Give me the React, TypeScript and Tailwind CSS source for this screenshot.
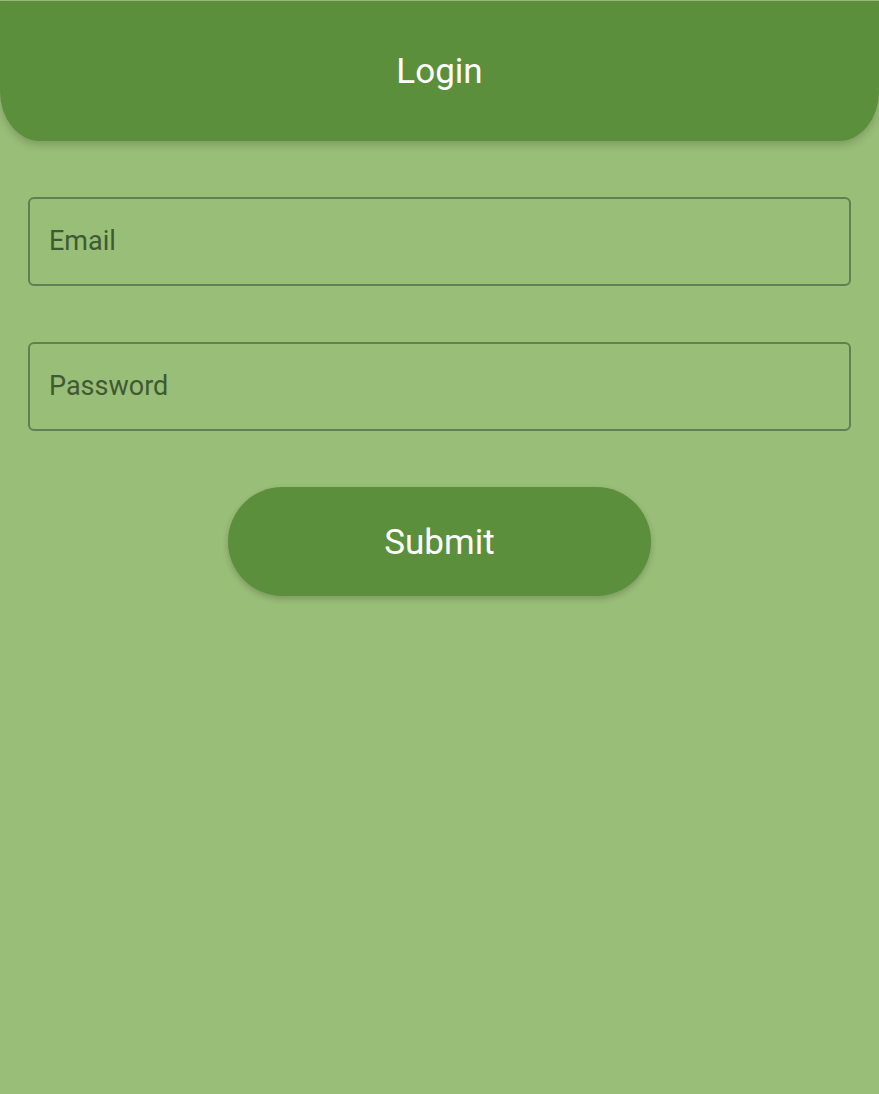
export default function App() {
  return (
    <div className="min-h-[1094px] bg-[#99be78] pt-px font-['Roboto',sans-serif]">
      <header className="flex h-[140px] items-center justify-center rounded-b-[40px_50px] bg-[#5b8f3c] shadow-[0_4px_8px_rgba(0,0,0,0.18)]">
        <h1 className="pt-[2px] text-[35px] font-normal text-white">Login</h1>
      </header>

      <form className="flex flex-col px-[28px] pt-[56px]" onSubmit={(e) => e.preventDefault()}>
        <label className="flex h-[89px] items-center rounded-[6px] border-2 border-[#617f52] px-[19px]">
          <input
            type="email"
            placeholder="Email"
            className="w-full bg-transparent text-[27px] text-[#3e5a31] outline-none placeholder:text-[#3e5a31]"
          />
        </label>
        <label className="mt-[56px] flex h-[89px] items-center rounded-[6px] border-2 border-[#617f52] px-[19px]">
          <input
            type="password"
            placeholder="Password"
            className="w-full bg-transparent text-[27px] text-[#3e5a31] outline-none placeholder:text-[#3e5a31]"
          />
        </label>
        <div className="mt-[56px] flex justify-center">
          <button
            type="submit"
            className="h-[109px] w-[423px] rounded-full bg-[#5b8f3c] pt-[3px] text-[35px] text-white shadow-[0_3px_6px_rgba(0,0,0,0.2)]"
          >
            Submit
          </button>
        </div>
      </form>
    </div>
  );
}
